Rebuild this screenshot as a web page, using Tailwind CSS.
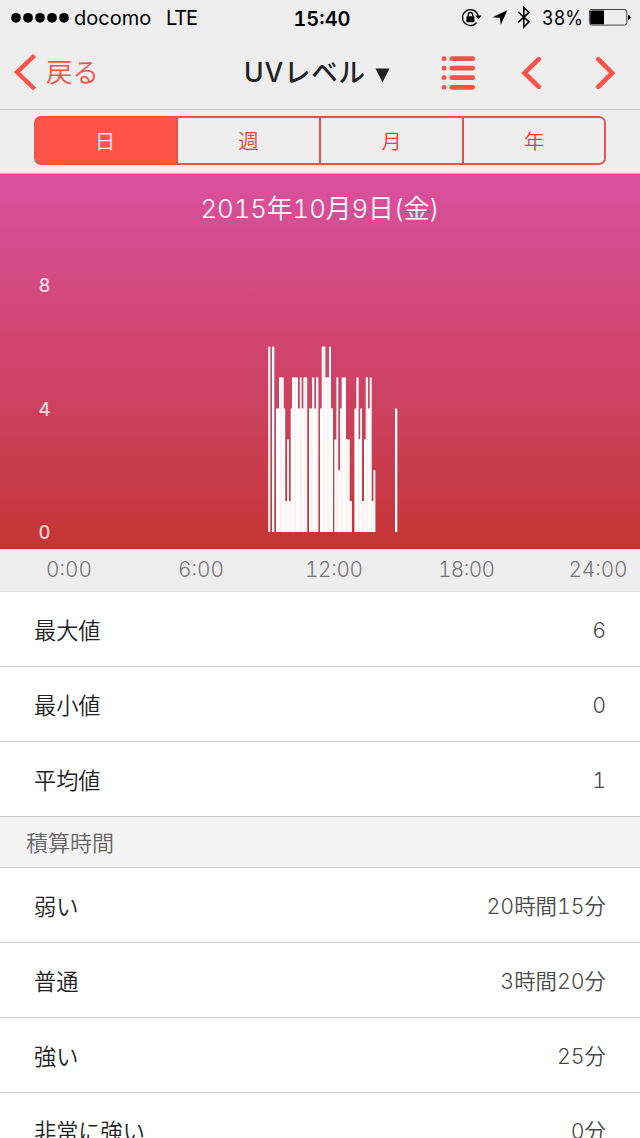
<!DOCTYPE html>
<html lang="ja">
<head>
<meta charset="utf-8">
<title>UVレベル</title>
<script src="https://cdn.jsdelivr.net/npm/@tailwindcss/browser@4"></script>
</head>
<body class="w-[640px] h-[1138px] overflow-hidden bg-white font-['Inter','Noto_Sans_CJK_JP',sans-serif] tabular-nums">
<header class="bg-[#eeeeee] border-b border-[#c3c3c5] h-[110px]">
  <div class="flex h-9 items-center text-black text-[20px]">
    <div class="flex w-[240px] items-center pl-[11px]">
      <svg class="w-[59px] h-[11px]" viewBox="0 0 59 11"><circle cx="5" cy="4.8" r="4.9"/><circle cx="17" cy="4.8" r="4.9"/><circle cx="29" cy="4.8" r="4.9"/><circle cx="41" cy="4.8" r="4.9"/><circle cx="53" cy="4.8" r="4.9"/></svg>
      <span class="ml-[4px] w-[92px] tracking-[0px]">docomo</span><span class="tracking-[-1.1px]">LTE</span>
    </div>
    <div class="w-[164px] text-center font-semibold text-[20px] pt-px">15:40</div>
    <div class="flex items-center flex-1">
      <svg class="ml-[57px] w-[170px] h-9" viewBox="461 0 170 36" fill="none">
        <path d="M477.8 14.4A8 8 0 1 0 476.6 22.8M477.8 14.4v3" stroke="#000" stroke-width="1.4"/>
        <path d="M475.5 15.5h6l-3 3.8z" fill="#000"/>
        <rect x="466.4" y="16.2" width="8" height="6" rx=".6" fill="#000"/>
        <path d="M468.2 16.5v-2a2.2 2.2 0 0 1 4.4 0v2" stroke="#000" stroke-width="1.3"/>
        <path d="M507.3 10.2L500.8 24.8L499.8 17.8L492.6 17.2z" fill="#000"/>
        <path d="M518.2 12L529 21.8L523.8 27V7.5L529 12.4L518.2 22.4" stroke="#000" stroke-width="1.6"/>
        <rect x="589.4" y="9.5" width="37.4" height="15.6" rx="2.5" stroke="#444" stroke-width="1"/>
        <path d="M591.5 10.5H604V24.2H591.5q-1.3 0-1.3-1.3V11.8q0-1.3 1.3-1.3z" fill="#000"/>
        <path d="M628 14.5q2.4 1 2.4 2.8t-2.4 2.8z" fill="#000"/>
        <text x="542" y="25" font-size="20" fill="#000" textLength="41" lengthAdjust="spacingAndGlyphs">38%</text>
      </svg>
    </div>
  </div>
  <div class="flex h-[73px] items-center text-[#ff4f48]">
    <div class="flex w-[244px] items-center pl-[14px]">
      <svg class="w-[24px] h-[37px]" viewBox="14 53.5 24 37" fill="none"><path d="M34.6 55L17 71.7L34.6 88.5" stroke="#ff5047" stroke-width="4.3"/></svg>
      <span class="ml-[8px] text-[26.5px] font-[350]">戻る</span>
    </div>
    <div class="w-[150px] flex items-center text-[#222] whitespace-nowrap">
      <span class="text-[26.5px] font-medium tracking-[0.8px]">UVレベル</span>
      <svg class="ml-[9px] mt-[5px] w-[15px] h-[15px]" viewBox="0 0 15 15"><path d="M.5 .5h14l-7 14z" fill="#222"/></svg>
    </div>
    <svg class="ml-[46px] w-[180px] h-[40px]" viewBox="440 52.5 180 40" fill="none" stroke="#ff5047" stroke-linecap="round" stroke-width="4.8">
      <path d="M451.8 58.2h20.9M451.8 67.7h20.9M451.8 77.2h20.9M451.8 86.8h20.9M444 58.2h.2M444 67.7h.2M444 77.2h.2M444 86.8h.2"/>
      <path d="M538.8 58.6L524.5 72.4L538.8 86.4M598.2 58.6L612.2 72.4L598.2 86.4" stroke-width="4.6"/>
    </svg>
  </div>
</header>
<nav class="bg-[#eeeeee] h-[64px] border-b border-[#b9b5b9] pt-[6px] pl-[34px]">
  <div class="grid grid-cols-[140px_143px_143px_1fr] w-[572px] h-[49px] rounded-[7px] border-2 border-[#f0524b] bg-linear-to-r from-[#ff5449] from-50% to-[#eeeeee] to-50% overflow-hidden text-[#e5443d] text-[20.5px] font-[350] leading-[48px] text-center">
    <div class="bg-[#ff5449] text-white/90 pr-[2px]">日</div>
    <div class="bg-[#eeeeee] border-l-2 border-[#e8504a]">週</div>
    <div class="bg-[#eeeeee] border-l-2 border-[#e8504a]">月</div>
    <div class="bg-[#eeeeee] border-l-2 border-[#e8504a]">年</div>
  </div>
</nav>
<main>
  <section class="h-[375px] bg-linear-to-b from-[#da509f] to-[#c43431] border-b border-[#ad2c2c]">
    <svg class="block w-[640px] h-[374px]" viewBox="0 174 640 374">
      <text x="200.5" y="218" font-size="25.8" font-weight="350" fill="#fff" textLength="239">2015年10月9日(金)</text>
      <g font-size="18.5" fill="#fff" fill-opacity=".8" font-weight="500" text-anchor="middle"><text x="44.5" y="292">8</text><text x="44.5" y="416">4</text><text x="44.5" y="539">0</text></g>
      <g id="bars" fill="#fff"></g>
    </svg>
  </section>
  <section class="h-[43px] bg-[#eeeeee] border-b border-[#e2e2e2]">
    <svg class="block w-[640px] h-[42px]" viewBox="0 549 640 42"><g font-size="20.8" fill="#777" font-weight="350"><text x="46" y="577" textLength="46">0:00</text><text x="178" y="577" textLength="46">6:00</text><text x="305" y="577" textLength="58">12:00</text><text x="438" y="577" textLength="57">18:00</text><text x="568.5" y="577" textLength="59">24:00</text></g></svg>
  </section>
  <dl class="text-[22.2px] font-[350] text-[#222] [&>div]:flex [&>div]:items-center [&>div]:justify-between [&>div]:h-[75px] [&>div]:px-[34px] [&>div]:pt-[3px] [&>div]:border-b [&>div]:border-[#c8c8c8] [&_dd]:text-[21.4px] [&_dd]:text-[#4a4a4a]">
    <div><dt>最大値</dt><dd>6</dd></div>
    <div><dt>最小値</dt><dd>0</dd></div>
    <div><dt>平均値</dt><dd>1</dd></div>
  </dl>
  <h2 class="h-[51px] bg-[#f4f4f4] border-b border-[#cccccc] pl-[26px] text-[22px] leading-[53px] font-[350] text-[#666]">積算時間</h2>
  <dl class="text-[22.2px] font-[350] text-[#222] [&>div]:flex [&>div]:items-center [&>div]:justify-between [&>div]:h-[75px] [&>div]:px-[34px] [&>div]:pt-[3px] [&>div]:border-b [&>div]:border-[#cfcfcf] [&_dd]:text-[21.4px] [&_dd]:text-[#4a4a4a]">
    <div><dt>弱い</dt><dd>20時間15分</dd></div>
    <div><dt>普通</dt><dd>3時間20分</dd></div>
    <div><dt>強い</dt><dd>25分</dd></div>
    <div><dt>非常に強い</dt><dd>0分</dd></div>
  </dl>
</main>
<script>
// [start x, end x, UV level]
const runs = [[268.2,270.3,6],[272,274.3,6],[276,279,4],[279,283.7,5],[283.7,285.2,4],[285.2,287.1,1],[287.1,289,3],[289,290.7,1],[290.7,292,4],[292,298,5],[298,299.8,4],[299.8,301.6,5],[301.6,303.4,4],[303.4,307.2,5],[309,312.1,4],[312.1,314.3,5],[314.3,316,4],[316,318.4,5],[320,321.7,4],[321.7,325.4,6],[325.4,329,5],[329,331,6],[331,333,4],[334.3,336.4,3],[336.4,338.3,5],[338.3,340,2],[340,341.7,4],[341.7,346,5],[346,349.7,3],[349.7,351.3,1],[354.4,356.4,4],[356.4,358.6,5],[358.6,360.2,3],[360.2,362,4],[362,364,1],[364,365.7,3],[365.7,368,5],[368,369.7,4],[369.7,371.7,5],[371.7,373.4,1],[373.4,375.4,2],[395,397.3,4]];
const stripes = [280,285,289,294,300,304,311,316,323,327,336,341,346,350,358,362,366,371];
// One path for all bars, so that neighbouring bars meet without seams
let d = '', out = '';
for (const [a,b,v] of runs) d += `M${a} ${532.1-30.9*v}H${b}V532.1H${a}z`;
for (const s of stripes) {
  const h = Math.min(...runs.filter(([a,b]) => b > s && a < s + 2).map(r => r[2])) * 30.9;
  out += `<rect x="${s}" y="${532-h}" width="2" height="${h}" fill="#fdf1f2"/>`;
}
document.getElementById('bars').innerHTML = `<path d="${d}"/>` + out;
</script>
</body>
</html>
